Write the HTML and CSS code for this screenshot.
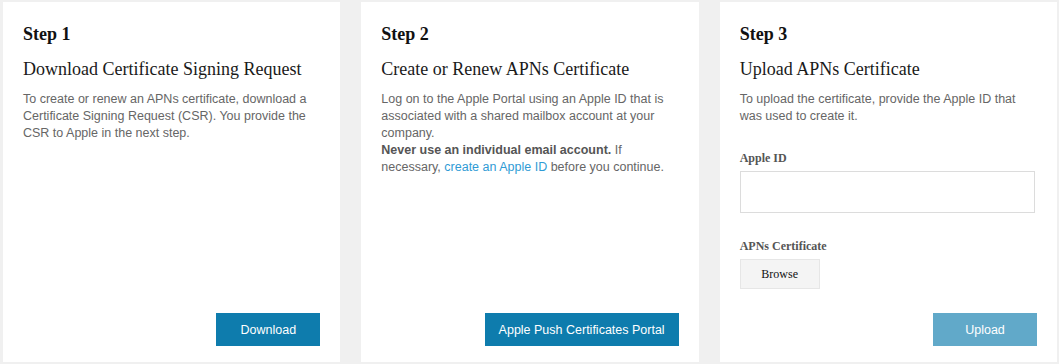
FILE: index.html
```html
<!DOCTYPE html>
<html>
<head>
    <title>APNs Certificate</title>
    <link rel="stylesheet" href="styles.css">
</head>
<body>
    <div class="steps">
        <section class="step">
            <h3 class="step-num">Step 1</h3>
            <h2 class="step-title">Download Certificate Signing Request</h2>
            <p class="step-text">To create or renew an APNs certificate, download a Certificate Signing Request (CSR). You provide the CSR to Apple in the next step.</p>
            <div class="step-actions">
                <button class="btn">Download</button>
            </div>
        </section>

        <section class="step">
            <h3 class="step-num">Step 2</h3>
            <h2 class="step-title">Create or Renew APNs Certificate</h2>
            <p class="step-text">Log on to the Apple Portal using an Apple ID that is associated with a shared mailbox account at your company.<br>
                <strong>Never use an individual email account.</strong> If necessary, <a href="#">create an Apple ID</a> before you continue.</p>
            <div class="step-actions">
                <button class="btn">Apple Push Certificates Portal</button>
            </div>
        </section>

        <section class="step">
            <h3 class="step-num">Step 3</h3>
            <h2 class="step-title">Upload APNs Certificate</h2>
            <p class="step-text">To upload the certificate, provide the Apple ID that was used to create it.</p>
            <form class="upload-form">
                <label class="field-label" for="appleId">Apple ID</label>
                <input type="text" id="appleId" class="field-input">
                <label class="field-label cert-label">APNs Certificate</label>
                <div><button type="button" class="browse">Browse</button></div>
            </form>
            <div class="step-actions">
                <button class="btn" disabled>Upload</button>
            </div>
        </section>
    </div>
</body>
</html>
```

FILE: styles.css
```css
html, body {
    height: 100%;
}
body {
    margin: 0;
    background: #f0f0f0;
    font-family: "Liberation Sans", Arial, sans-serif;
}
.steps {
    display: flex;
    gap: 21px;
    height: 100%;
    box-sizing: border-box;
    padding: 2px 2px 2px 3px;
}
.step {
    flex: 1 1 0;
    display: flex;
    flex-direction: column;
    background: #fff;
    padding: 22px 20px 16px 20px;
}
.step-num {
    margin: 0;
    font-family: "Liberation Serif", "Times New Roman", serif;
    font-size: 18px;
    line-height: 21px;
    font-weight: bold;
    color: #111;
}
.step-title {
    margin: 13px 0 0 0;
    font-family: "Liberation Serif", "Times New Roman", serif;
    font-size: 18px;
    line-height: 23px;
    font-weight: normal;
    color: #1a1a1a;
}
.step-text {
    margin: 10px 0 0 0;
    font-size: 12.5px;
    line-height: 17px;
    color: #666;
}
.step-text strong {
    color: #555;
}
.step-text a {
    color: #2f9bd5;
    text-decoration: none;
}
.upload-form {
    display: flex;
    flex-direction: column;
    margin-top: 26px;
}
.field-label {
    font-family: "Liberation Serif", "Times New Roman", serif;
    font-size: 12px;
    line-height: 14px;
    font-weight: bold;
    color: #555;
}
.field-input {
    margin: 6px 2px 0 0;
    height: 42px;
    box-sizing: border-box;
    border: 1px solid #dcdcdc;
    padding: 0 8px;
    font-size: 13px;
}
.cert-label {
    margin-top: 26px;
}
.browse {
    margin-top: 6px;
    width: 80px;
    height: 30px;
    background: #f4f4f4;
    border: 1px solid #e6e6e6;
    font-family: "Liberation Serif", "Times New Roman", serif;
    font-size: 12px;
    color: #111;
}
.step-actions {
    margin-top: auto;
    display: flex;
    justify-content: flex-end;
}
.btn {
    min-width: 104px;
    height: 33px;
    padding: 0 14px;
    border: none;
    background: #0e7cad;
    color: #fff;
    font-family: "Liberation Sans", Arial, sans-serif;
    font-size: 12.5px;
}
.btn:disabled {
    background: #61a9c9;
}
```
